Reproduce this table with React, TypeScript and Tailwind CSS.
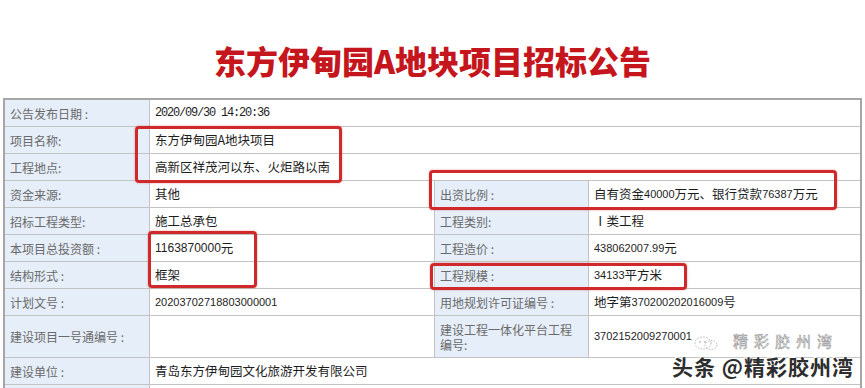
import React from "react";

const L = ({ children, className = "" }: { children?: React.ReactNode; className?: string }) => (
  <div className={`bg-[#e5eef9] text-[#6a6a6a] text-[12px] pl-[5px] flex items-center leading-[15px] ${className}`}>{children}</div>
);
const V = ({ children, className = "" }: { children?: React.ReactNode; className?: string }) => (
  <div className={`bg-white text-[#1e1e1e] text-[12.5px] pl-[5px] flex items-center whitespace-nowrap ${className}`}>{children}</div>
);
const N = ({ children }: { children: React.ReactNode }) => (
  <span className="font-['Liberation_Sans',sans-serif] text-[11px]">{children}</span>
);

export default function App() {
  return (
    <div className="relative w-[865px] h-[388px] overflow-hidden bg-white font-['Noto_Sans_CJK_SC','Noto_Sans',sans-serif]">
      <div className="h-[98px] pt-[22px] flex items-center justify-center">
        <h1 className="text-[32px] leading-none font-black text-[#c4161c]">东方伊甸园A地块项目招标公告</h1>
      </div>
      <div className="ml-[3px] w-[859px] border-t-2 border-l-2 border-r-2 border-[#a6a6a6] bg-[#c3c3c3] grid grid-cols-[144px_284px_153px_271px] grid-rows-[26px_26px_26px_26px_26px_26px_26px_26px_41px_26px_26px] gap-px">
        <L>公告发布日期 :</L>
        <V className="col-span-3"><span className="font-['Liberation_Mono',monospace] text-[12px] tracking-[-1.2px]">2020/09/30 14:20:36</span></V>
        <L>项目名称:</L>
        <V className="col-span-3">东方伊甸园A地块项目</V>
        <L>工程地点:</L>
        <V className="col-span-3">高新区祥茂河以东、火炬路以南</V>
        <L>资金来源:</L>
        <V>其他</V>
        <L>出资比例 :</L>
        <V>自有资金<N>40000</N>万元、银行贷款<N>76387</N>万元</V>
        <L>招标工程类型:</L>
        <V>施工总承包</V>
        <L>工程类别:</L>
        <V>Ⅰ类工程</V>
        <L>本项目总投资额 :</L>
        <V><span className="font-['Liberation_Sans',sans-serif] text-[12px]">1163870000</span>元</V>
        <L>工程造价 :</L>
        <V><N>438062007.99</N>元</V>
        <L>结构形式 :</L>
        <V>框架</V>
        <L>工程规模 :</L>
        <V><N>34133</N>平方米</V>
        <L>计划文号 :</L>
        <V><N>20203702718803000001</N></V>
        <L>用地规划许可证编号 :</L>
        <V>地字第<N>370200202016009</N>号</V>
        <L>建设项目一号通编号 :</L>
        <V></V>
        <L className="pr-[14px]">建设工程一体化平台工程编号:</L>
        <V><N>3702152009270001</N></V>
        <L>建设单位 :</L>
        <V className="col-span-3">青岛东方伊甸园文化旅游开发有限公司</V>
        <L></L>
        <V className="col-span-3"></V>
      </div>

      {/* red annotation boxes */}
      <div className="absolute left-[135px] top-[126px] w-[207px] h-[57px] border-[3px] border-[#d0292b] rounded-[4px] shadow-[0_0_2px_rgba(200,40,40,0.5)]" />
      <div className="absolute left-[429px] top-[170px] w-[408px] h-[40px] border-[3px] border-[#d0292b] rounded-[4px] shadow-[0_0_2px_rgba(200,40,40,0.5)]" />
      <div className="absolute left-[148px] top-[231px] w-[109px] h-[57px] border-[3px] border-[#d0292b] rounded-[4px] shadow-[0_0_2px_rgba(200,40,40,0.5)]" />
      <div className="absolute left-[430px] top-[263px] w-[257px] h-[27px] border-[3px] border-[#d0292b] rounded-[4px] shadow-[0_0_2px_rgba(200,40,40,0.5)]" />

      {/* watermark */}
      <svg className="absolute left-[692px] top-[335px]" width="30" height="16" viewBox="0 0 30 16">
        <ellipse cx="11" cy="8" rx="8" ry="6" fill="none" stroke="#a0a0a0" strokeWidth="0.8" strokeDasharray="1.5 1.5" />
        <ellipse cx="19" cy="10" rx="6" ry="4.5" fill="none" stroke="#a0a0a0" strokeWidth="0.8" strokeDasharray="1.5 1.5" />
        <circle cx="8" cy="7" r="0.8" fill="#999" />
        <circle cx="13" cy="7" r="0.8" fill="#999" />
      </svg>
      <div className="absolute left-[733px] top-[333px] text-[15px] leading-none tracking-[6px] text-white [-webkit-text-stroke:0.6px_#9a9a9a]">精彩胶州湾</div>
      <div className="absolute left-[672px] top-[356px] text-[21px] leading-none tracking-[1px] font-bold text-[#2e2e2e] [text-shadow:0_0_2px_#fff,1px_1px_0_#fff,-1px_-1px_0_#fff]">头条 @精彩胶州湾</div>
    </div>
  );
}
